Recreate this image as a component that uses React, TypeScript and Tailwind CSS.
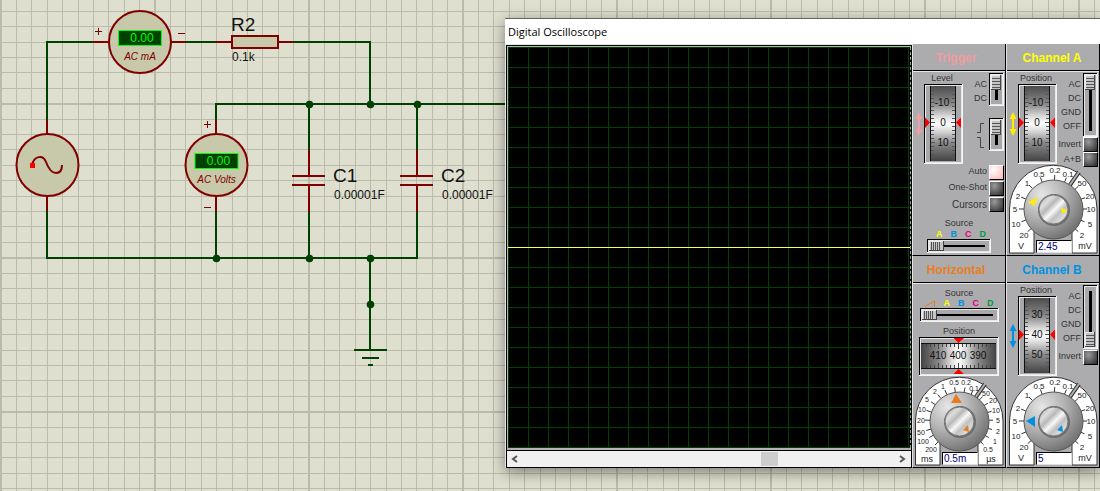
import { useId, useState } from "react";
import type { ReactNode } from "react";

type Mark = [string, number, number];

const WIRE = "#004000";
const PART = "#800000";
const BODY = "#c8c8aa";

const range = (n: number) => Array.from({ length: n }, (_, i) => i);

function Node({ x, y }: { x: number; y: number }) {
  return <circle cx={x} cy={y} r="3.8" fill={WIRE} />;
}

function Capacitor({ x, name }: { x: number; name: string }) {
  return (
    <g strokeWidth="2">
      <path d={`M${x} 104V150M${x} 212V259`} stroke={WIRE} />
      <path d={`M${x} 150V175M${x} 185V212M${x - 17} 176H${x + 16}M${x - 17} 185H${x + 16}`} stroke={PART} />
      <text x={x + 24} y="182" fontSize="19" fill="#111">{name}</text>
      <text x={x + 25} y="199" fontSize="12" fill="#111">0.00001F</text>
    </g>
  );
}

function Meter({ x, y, unit }: { x: number; y: number; unit: string }) {
  return (
    <g>
      <circle cx={x} cy={y} r="31" fill={BODY} stroke={PART} strokeWidth="2" />
      <rect x={x - 21.5} y={y - 11.5} width="43" height="15" fill={WIRE} stroke="#00ff00" strokeWidth="1" />
      <text x={x + 2} y={y} fontSize="12" fill="#00ff00" textAnchor="middle">0.00</text>
      <text x={x} y={y + 18} fontSize="10" fontStyle="italic" fill={PART} textAnchor="middle">{unit}</text>
    </g>
  );
}

function Schematic() {
  return (
    <svg className="absolute inset-0 h-full w-full" fontFamily="'Liberation Sans', Arial, sans-serif" fill="none" aria-label="Circuit schematic">
      <g fill="#bbbbab">
        {range(130).map((i) => (
          <rect key={i} x={Math.floor(1 + i * 15.4) - (i % 10 ? 0 : 1)} y="0" width={i % 10 ? 1 : 2} height="100%" />
        ))}
        {range(90).map((i) => (
          <rect key={i} x="0" y={Math.floor(11.2 + i * 15.4)} width="100%" height={i % 10 === 6 ? 2 : 1} />
        ))}
      </g>
      <g stroke={WIRE} strokeWidth="2">
        <path d="M93 42H47V120M186 42H216M293 42H370V104M216 120V104H520M47 211V258H417M216 211V258M370 258V349" />
        <path d="M354 350H387M362 358H379M368 365H373" />
      </g>
      <g stroke={PART} strokeWidth="2">
        <path d="M93 42H108M171 42H186M216 42H232M278 42H293M47 120V134M47 196V211M216 120V134M216 196V211" />
        <rect x="232" y="36" width="46" height="12" fill={BODY} />
      </g>
      <path d="M95 31.500H102M98.500 28V35M178 33.500H185M204 124.500H211M207.500 121V128M204 207.500H211" stroke={PART} />
      <Meter x={140} y={42} unit="AC mA" />
      <Meter x={216.5} y={165} unit="AC Volts" />
      <circle cx="47.500" cy="165" r="31" fill={BODY} stroke={PART} strokeWidth="2" />
      <path d="M32 165C34 156 43 154 46 162C49 170 52 173 56 173C61 173 62 169 62 165" stroke={PART} strokeWidth="2" />
      <rect x="30" y="163" width="5" height="5" fill="#ff0000" />
      <Capacitor x={309} name="C1" />
      <Capacitor x={417} name="C2" />
      <Node x={309.5} y={104.5} />
      <Node x={370.5} y={104.5} />
      <Node x={417.5} y={104.5} />
      <Node x={216.5} y={258.5} />
      <Node x={309.5} y={258.5} />
      <Node x={370.5} y={258.5} />
      <Node x={370.5} y={304.5} />
      <text x="231" y="31" fontSize="19" fill="#111">R2</text>
      <text x="232" y="61" fontSize="12" fill="#111">0.1k</text>
    </svg>
  );
}

function HiddenRange({ label, vertical, id }: { label: string; vertical?: boolean; id?: string }) {
  return (
    <input
      id={id}
      type="range"
      aria-label={label}
      aria-orientation={vertical ? "vertical" : "horizontal"}
      className="absolute inset-0 m-0 h-full w-full cursor-pointer opacity-0"
    />
  );
}

function Handle({ x, y, upright }: { x: number; y: number; upright: boolean }) {
  const w = upright ? 10 : 15;
  const h = upright ? 15 : 10;
  return (
    <g>
      <rect x={x} y={y} width={w} height={h} fill="#444" />
      <rect x={x} y={y} width={w - 1} height={h - 1} fill="#e8e8e8" />
      <rect x={x + 1} y={y + 1} width={w - 2} height={h - 2} fill="#c4c4c4" />
      {range(upright ? 4 : 5).map((i) =>
        upright ? (
          <rect key={i} x={x + 1} y={y + 3 + i * 3} width="8" height="1" fill="#555" />
        ) : (
          <rect key={i} x={x + 2 + i * 2} y={y + 1} width="1" height="8" fill="#555" />
        ),
      )}
    </g>
  );
}

function Slide({ label, length, upright, end }: { label: string; length: number; upright?: boolean; end?: boolean }) {
  const w = upright ? 15 : length;
  const h = upright ? length : 14;
  return (
    <div className="relative shrink-0">
      <svg width={w} height={h} className="block" aria-hidden="true">
        <rect width={w} height={h} fill="#f4f4f4" />
        <rect width={w - 1} height={h - 1} fill="#000" />
        <rect x="1" y="1" width={w - 2} height={h - 2} fill="#e8e8e8" />
        <rect x="2" y="2" width={w - 4} height={h - 4} fill="#a8a8aa" />
        {upright ? <rect x="6" y="6" width="3" height={h - 12} fill="#000" /> : <rect x="6" y="6" width={w - 12} height="2" fill="#000" />}
        <Handle x={2} y={upright && end ? h - 17 : 2} upright={!!upright} />
      </svg>
      <HiddenRange label={label} vertical={upright} />
    </div>
  );
}

function Wheel({ id, marks }: { id: string; marks: string[] }) {
  const g = useId();
  return (
    <div className="relative">
      <svg width="39" height="80" className="block" fontFamily="'Liberation Sans', Arial, sans-serif" fontSize="10" aria-hidden="true">
        <defs>
          <linearGradient id={g} x1="0" y1="0" x2="0" y2="1">
            <stop offset="0" stopColor="#4c4c4c" />
            <stop offset="0.25" stopColor="#8c8c8c" />
            <stop offset="0.4" stopColor="#d8d8d8" />
            <stop offset="0.5" stopColor="#ffffff" />
            <stop offset="0.6" stopColor="#d8d8d8" />
            <stop offset="0.75" stopColor="#8c8c8c" />
            <stop offset="1" stopColor="#444444" />
          </linearGradient>
        </defs>
        <rect width="39" height="80" fill="#f4f4f4" />
        <rect width="38" height="79" fill="#000" />
        <rect x="1" y="1" width="37" height="78" fill="#e8e8e8" />
        <rect x="2" y="2" width="35" height="76" fill="#a8a8aa" />
        <rect x="6" y="2" width="26" height="75" fill="#111" />
        <rect x="7" y="2" width="24" height="75" fill={`url(#${g})`} />
        {range(19).map((i) => (
          <path key={i} d={`M7 ${2.5 + i * 4}h${i % 5 === 4 ? 4 : 3}M31 ${2.5 + i * 4}h${i % 5 === 4 ? -4 : -3}`} stroke="#555" />
        ))}
        {marks.map((m, i) => (
          <text key={m} x={m.startsWith("-") ? 18 : 19} y={22 + i * 20} textAnchor="middle" fill="#111">{m}</text>
        ))}
        <path d="M1 33.500V44L6 38.500ZM37 33.500V44L32 38.500Z" fill="#ff0000" />
      </svg>
      <HiddenRange id={id} label="Position" vertical />
    </div>
  );
}

function WheelColumn({ label, marks, fill }: { label: string; marks: string[]; fill: string }) {
  const id = useId();
  return (
    <div className="flex flex-col">
      <label htmlFor={id} className="pl-2 text-center leading-3">{label}</label>
      <div className="flex items-center gap-px">
        <svg width="10" height="24" className="block" aria-hidden="true">
          <path d="M6 0L9.500 7H7V17H9.500L6 24L2.500 17H5V7H2.500Z" fill={fill} />
        </svg>
        <Wheel id={id} marks={marks} />
      </div>
    </div>
  );
}

function PushButton({ label, lit, wide }: { label: string; lit?: boolean; wide?: boolean }) {
  const [on, setOn] = useState(!!lit);
  return (
    <button type="button" aria-pressed={on} onClick={() => setOn(!on)} className="flex h-4 items-center justify-end gap-[2px]">
      <span className={wide ? "text-[10px]" : ""}>{label}</span>
      <span
        className={
          on
            ? "block h-[15px] w-[15px] border-r border-b border-t border-l border-t-white border-l-white border-r-black border-b-black bg-radial-[at_30%_30%] from-white to-[#ffb4b4]"
            : "block h-[15px] w-[15px] border-r border-b border-t border-l border-t-white border-l-white border-r-black border-b-black bg-radial-[at_35%_30%] from-[#9a9a9a] to-[#262626]"
        }
      />
    </button>
  );
}

function Sources() {
  return (
    <>
      <span className="text-[#ffff00]">A</span>
      <span className="text-[#0091e0]">B</span>
      <span className="text-[#e0007a]">C</span>
      <span className="text-[#009a44]">D</span>
    </>
  );
}

function Knob({
  label,
  marks,
  units,
  outer,
  inner,
  fill,
  value,
  markSize,
}: {
  label: string;
  marks: Mark[];
  units: Mark[];
  outer: string;
  inner: string;
  fill: string;
  value: string;
  markSize: number;
}) {
  const id = useId();
  return (
    <div className="relative mx-auto h-[90px] w-[90px]">
      <svg width="90" height="90" className="block" fontFamily="'Liberation Sans', Arial, sans-serif" aria-hidden="true">
        <defs>
          <radialGradient id={`${id}a`} cx="0.3" cy="0.25" r="0.85">
            <stop offset="0" stopColor="#e6e6e6" />
            <stop offset="0.45" stopColor="#b4b4b4" />
            <stop offset="1" stopColor="#6a6a6a" />
          </radialGradient>
          <linearGradient id={`${id}b`} x1="0" y1="0" x2="1" y2="1">
            <stop offset="0" stopColor="#969696" />
            <stop offset="0.25" stopColor="#dedede" />
            <stop offset="0.38" stopColor="#b8b8b8" />
            <stop offset="0.52" stopColor="#f8f8f8" />
            <stop offset="0.65" stopColor="#c0c0c0" />
            <stop offset="0.8" stopColor="#dadada" />
            <stop offset="1" stopColor="#a0a0a0" />
          </linearGradient>
        </defs>
        <path d="M1.500 89V45A43.500 43.500 0 0 1 89 45V89H64V64H26V89Z" fill="#fff" stroke="#333" />
        <path d="M62 21L71 8" stroke="#333" strokeWidth="4" />
        <path d="M61.500 21.500L72 6.500" stroke="#b0b0b0" strokeWidth="2" />
        {marks.map(([t, x, y]) => {
          const a = Math.atan2(y - 45, x - 45);
          return (
            <line
              key={`${t}-${x}`}
              x1={45 + Math.cos(a) * 29}
              y1={45 + Math.sin(a) * 29}
              x2={45 + Math.cos(a) * 34}
              y2={45 + Math.sin(a) * 34}
              stroke="#333"
            />
          );
        })}
        <circle cx="45.500" cy="45.500" r="29.500" fill={`url(#${id}a)`} stroke="#555" />
        <circle cx="46" cy="46" r="16" fill="#6c6c6c" />
        <circle cx="45.500" cy="45.500" r="14.500" fill={`url(#${id}b)`} stroke="#777" />
        <polygon points={outer} fill={fill} />
        <polygon points={inner} fill={fill} />
        <g fontSize={markSize} fill="#222" textAnchor="middle">
          {marks.map(([t, x, y]) => (
            <text key={`${t}-${x}`} x={x} y={y + 3}>{t}</text>
          ))}
        </g>
        <g fontSize="9" fill="#222" textAnchor="middle">
          {units.map(([t, x, y]) => (
            <text key={t} x={x} y={y + 3}>{t}</text>
          ))}
        </g>
      </svg>
      <HiddenRange label={label} />
      <input
        aria-label={`${label} value`}
        defaultValue={value}
        className="absolute bottom-px left-7 h-[13px] w-9 border border-t-black border-l-black border-r-[#ddd] border-b-[#ddd] bg-white px-px text-[10px] leading-3 text-[#000080] outline-none"
      />
    </div>
  );
}

const VOLT_MARKS: Mark[] = [
  ["0.5", 31, 10], ["0.2", 47, 6], ["0.1", 60, 10], ["1", 19, 19], ["2", 10, 32], ["5", 7, 45], ["10", 8, 60], ["20", 16, 71],
  ["50", 74, 19], ["20", 82, 32], ["10", 83, 45], ["5", 82, 60], ["2", 74, 71],
];
const VOLT_UNITS: Mark[] = [["V", 13, 82], ["mV", 77, 82]];
const TIME_MARKS: Mark[] = [
  ["1", 29, 10], ["0.5", 40, 6], ["0.2", 52, 6], ["0.1", 60, 12], ["2", 21, 15], ["5", 13, 23], ["10", 8, 33], ["20", 7, 44],
  ["50", 7, 56], ["100", 9, 65], ["200", 17, 73], ["50", 72, 17], ["20", 79, 24], ["10", 82, 34], ["5", 84, 44], ["2", 84, 55],
  ["1", 81, 65], ["0.5", 74, 73],
];
const TIME_UNITS: Mark[] = [["ms", 13, 83], ["µs", 77, 83]];

function Panel({ title, color, children }: { title: string; color: string; children: ReactNode }) {
  return (
    <section className="flex w-[94px] flex-col border-r border-b border-l border-r-black border-b-black border-l-[#e4e4e4] bg-[#acacae]">
      <h2 className={`flex h-[27px] items-center justify-center border-b border-black pt-[2px] text-[12px] font-bold ${color}`}>{title}</h2>
      <div className="flex grow flex-col border-t border-[#e4e4e4]">{children}</div>
    </section>
  );
}

function Trigger() {
  return (
    <Panel title="Trigger" color="pr-[6px] text-[#f19ba3]">
      <div className="flex h-[92px] justify-between pr-px">
        <WheelColumn label="Level" marks={["-10", "0", "10"]} fill="#f19ba3" />
        <div className="flex flex-col items-end gap-3 pt-px">
          <div className="flex gap-[2px]">
            <div className="pt-1 text-right leading-[14px]">AC<br />DC</div>
            <Slide label="Coupling" length={33} upright />
          </div>
          <div className="flex gap-1">
            <svg width="9" height="33" fill="none" stroke="#444" aria-hidden="true">
              <path d="M1 14.500H4.500V5.500H8M1 19.500H4.500V29.500H8" />
            </svg>
            <Slide label="Edge" length={33} upright />
          </div>
        </div>
      </div>
      <div className="flex flex-col items-end pr-px">
        <PushButton label="Auto" lit />
        <PushButton label="One-Shot" />
        <PushButton label="Cursors" wide />
      </div>
      <div className="flex flex-col items-center pt-[5px]">
        <span className="leading-3">Source</span>
        <div className="flex gap-2 pl-1 text-[9px] leading-[10px] font-bold"><Sources /></div>
        <Slide label="Trigger source" length={64} />
      </div>
    </Panel>
  );
}

function Horizontal() {
  const g = useId();
  const id = useId();
  return (
    <Panel title="Horizontal" color="pr-[6px] text-[#e87d1e]">
      <div className="flex flex-col items-center pt-[3px]">
        <span className="leading-3">Source</span>
        <div className="flex items-center gap-2 pb-px text-[9px] leading-[8px] font-bold">
          <svg width="11" height="7" fill="none" stroke="#e87d1e" aria-hidden="true"><path d="M0 6.500L9.500 1V7" /></svg>
          <Sources />
        </div>
        <Slide label="Horizontal source" length={79} />
        <label htmlFor={id} className="pt-[3px] leading-3">Position</label>
        <div className="relative">
          <svg width="80" height="39" className="block" fontFamily="'Liberation Sans', Arial, sans-serif" fontSize="10" aria-hidden="true">
            <defs>
              <linearGradient id={g}>
                <stop offset="0" stopColor="#444" />
                <stop offset="0.25" stopColor="#8c8c8c" />
                <stop offset="0.4" stopColor="#dadada" />
                <stop offset="0.5" stopColor="#fff" />
                <stop offset="0.6" stopColor="#dadada" />
                <stop offset="0.75" stopColor="#8c8c8c" />
                <stop offset="1" stopColor="#444" />
              </linearGradient>
            </defs>
            <rect width="80" height="39" fill="#f4f4f4" />
            <rect width="79" height="38" fill="#000" />
            <rect x="1" y="1" width="78" height="37" fill="#e8e8e8" />
            <rect x="2" y="2" width="76" height="35" fill="#a8a8aa" />
            <rect x="2" y="6" width="75" height="26" fill="#111" />
            <rect x="2" y="7" width="75" height="24" fill={`url(#${g})`} />
            {range(19).map((i) => (
              <path key={i} d={`M${3.5 + i * 4} 7v${i % 5 === 4 ? 5 : 3}M${3.5 + i * 4} 31v${i % 5 === 4 ? -5 : -3}`} stroke="#444" />
            ))}
            <g textAnchor="middle" fill="#111">
              <text x="19" y="22">410</text>
              <text x="39" y="22">400</text>
              <text x="59" y="22">390</text>
            </g>
            <path d="M34.500 1H45L39.500 6ZM34.500 37H45L39.500 32Z" fill="#ff0000" />
          </svg>
          <HiddenRange id={id} label="Position" />
        </div>
      </div>
      <Knob label="Timebase" marks={TIME_MARKS} units={TIME_UNITS} outer="42,18 37,27 48,27" inner="49,54 54,49 55,56" fill="#e87d1e" value="0.5m" markSize={7} />
    </Panel>
  );
}

function Channel({ name, color, fill, marks, off, sum, outer, inner, value }: {
  name: string;
  color: string;
  fill: string;
  marks: string[];
  off?: boolean;
  sum?: boolean;
  outer: string;
  inner: string;
  value: string;
}) {
  return (
    <Panel title={`Channel ${name}`} color={color}>
      <div className="flex h-[92px] justify-between pr-px">
        <WheelColumn label="Position" marks={marks} fill={fill} />
        <div className="relative z-10 flex flex-col items-end pt-px">
          <div className="flex gap-[2px]">
            <div className="pt-1 text-right leading-[14px]">AC<br />DC<br />GND<br />OFF</div>
            <Slide label={`Channel ${name} coupling`} length={64} upright end={off} />
          </div>
          <PushButton label="Invert" />
          {sum && <PushButton label="A+B" />}
        </div>
      </div>
      <Knob label={`Channel ${name} scale`} marks={VOLT_MARKS} units={VOLT_UNITS} outer={outer} inner={inner} fill={fill} value={value} markSize={8} />
    </Panel>
  );
}

function Display() {
  return (
    <div className="mt-px ml-px flex min-w-0 flex-1 flex-col border-t border-r border-l border-black bg-[#b4b4b4]">
      <div className="mt-px mb-[2px] ml-px flex flex-1 flex-col justify-center border-r border-dashed border-[#a0a0a0] bg-black bg-[linear-gradient(to_right,#004000_1px,transparent_1px),linear-gradient(to_bottom,#004000_1px,transparent_1px)] bg-[length:20px_20px]">
        <div className="h-px bg-[#ffff40]" />
      </div>
      <div className="flex h-[18px] items-center justify-between border-t border-b border-black bg-[#f0f0f0] px-1">
        <button type="button" aria-label="Scroll left" className="flex h-4 w-2 items-center">
          <svg width="7" height="8" fill="none" stroke="#555" strokeWidth="2"><path d="M6 1L2 4L6 7" /></svg>
        </button>
        <div className="flex h-full flex-1 justify-end pr-[121px]">
          <div className="my-px w-[17px] bg-[#cdcdcd]" />
        </div>
        <button type="button" aria-label="Scroll right" className="flex h-4 w-2 items-center">
          <svg width="7" height="8" fill="none" stroke="#555" strokeWidth="2"><path d="M1 1L5 4L1 7" /></svg>
        </button>
      </div>
    </div>
  );
}

export default function App() {
  return (
    <main className="relative min-h-screen overflow-hidden bg-[#dfdfcf] font-['Liberation_Sans',Arial,sans-serif]">
      <Schematic />
      <div className="absolute top-[18px] right-0 left-[505px] border-t border-[#666] bg-[#e4e4e4] shadow-[0_4px_14px_rgba(0,0,0,0.45)]">
        <h1 className="bg-white pl-[3px] font-['Open_Sans',sans-serif] text-[11px] leading-[25px] text-black">Digital Oscilloscope</h1>
        <div className="flex text-[9px] text-[#333]">
          <Display />
          <div className="grid grid-cols-[94px_94px] grid-rows-[212px_212px]">
            <Trigger />
            <Channel name="A" color="pr-[2px] text-[#ffff00]" fill="#ffee00" marks={["-10", "0", "10"]} sum outer="20,38 30,33 26,42" inner="53,43 59,47 54,50" value="2.45" />
            <Horizontal />
            <Channel name="B" color="pr-[2px] text-[#0091e0]" fill="#0091e0" marks={["30", "40", "50"]} off outer="18,45 27,40 27,51" inner="49,54 54,49 55,56" value="5" />
          </div>
        </div>
      </div>
    </main>
  );
}
